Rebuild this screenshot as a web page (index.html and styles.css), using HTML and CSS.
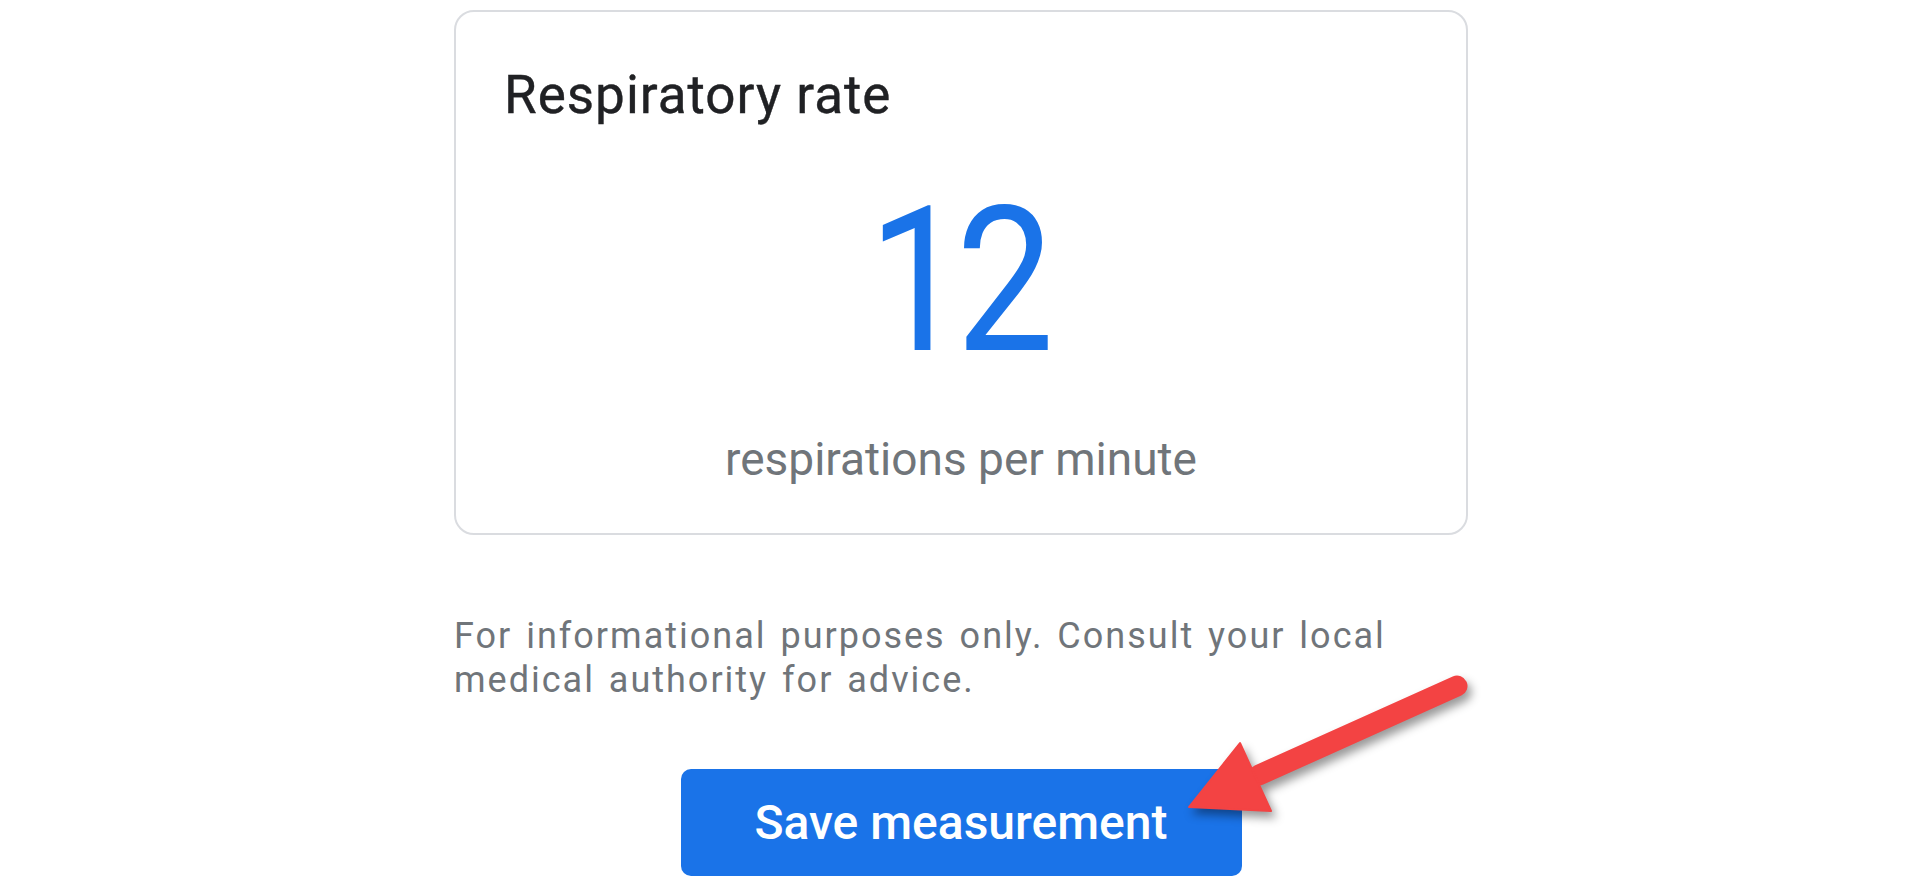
FILE: index.html
```html
<!DOCTYPE html>
<html>
    <head>
        <title>Respiratory rate</title>
        <link rel="stylesheet" href="styles.css">
    </head>
    <body>
        <div class="page">
            <div class="card">
                <p class="card-title">Respiratory rate</p>
                <p class="value"><span>12</span></p>
                <p class="unit">respirations per minute</p>
            </div>

            <p class="disclaimer">For informational purposes only. Consult your local medical authority for advice.</p>

            <div class="actions">
                <button class="save-btn">Save measurement</button>
                <!-- strzalka z adnotacji na screenie -->
                <svg class="pointer" width="310" height="160" viewBox="0 0 310 160">
                    <line x1="288" y1="17" x2="90" y2="106" stroke="#f34343" stroke-width="21" stroke-linecap="round"/>
                    <polygon points="20,138 71,74 102,142" fill="#f34343" stroke="#f34343" stroke-width="2" stroke-linejoin="round"/>
                </svg>
            </div>
        </div>
    </body>
</html>
```

FILE: styles.css
```css
:root {
    --blue: #1a73e8;
    --title-clr: #202124;
    --muted-clr: #70757a;
    --border-clr: #dadce0;
}

body {
    margin: 0;
    background-color: #ffffff;
    font-family: Roboto, 'Liberation Sans', sans-serif;
}

p {
    margin: 0;
}

.page {
    width: 1014px;
    margin: 0 auto;
    padding-left: 2px;
    display: flex;
    flex-direction: column;
}

.card {
    margin-top: 10px;
    height: 525px;
    box-sizing: border-box;
    border: 2px solid var(--border-clr);
    border-radius: 20px;
    padding: 51px 48px 0 48px;
    display: flex;
    flex-direction: column;
}

.card-title {
    font-size: 53px;
    line-height: 64px;
    font-weight: 400;
    letter-spacing: 1px;
    color: var(--title-clr);
    -webkit-text-stroke: 0.4px var(--title-clr);
}

.value {
    margin-top: 53px;
    font-size: 203px;
    line-height: 203px;
    color: var(--blue);
    text-align: center;
    letter-spacing: -12px;
}
/* cyfry w oryginale sa wezsze niz w Roboto */
.value span {
    display: inline-block;
    margin-left: -10px;
    transform: scaleX(0.86);
}

.unit {
    margin-top: 49px;
    font-size: 46px;
    line-height: 54px;
    color: var(--muted-clr);
    text-align: center;
}

.disclaimer {
    margin-top: 79px;
    font-size: 36px;
    line-height: 44px;
    letter-spacing: 2px;
    word-spacing: 3px;
    color: var(--muted-clr);
}

.actions {
    position: relative;
    margin-top: 67px;
    display: flex;
    justify-content: center;
}

.save-btn {
    width: 561px;
    height: 107px;
    border: none;
    border-radius: 10px;
    background-color: var(--blue);
    color: #ffffff;
    font-family: Roboto, 'Liberation Sans', sans-serif;
    font-size: 48px;
    font-weight: 500;
}

.pointer {
    position: absolute;
    left: 715px;
    top: -100px;
    filter: drop-shadow(4px 6px 5px rgba(0, 0, 0, 0.4));
}
```
